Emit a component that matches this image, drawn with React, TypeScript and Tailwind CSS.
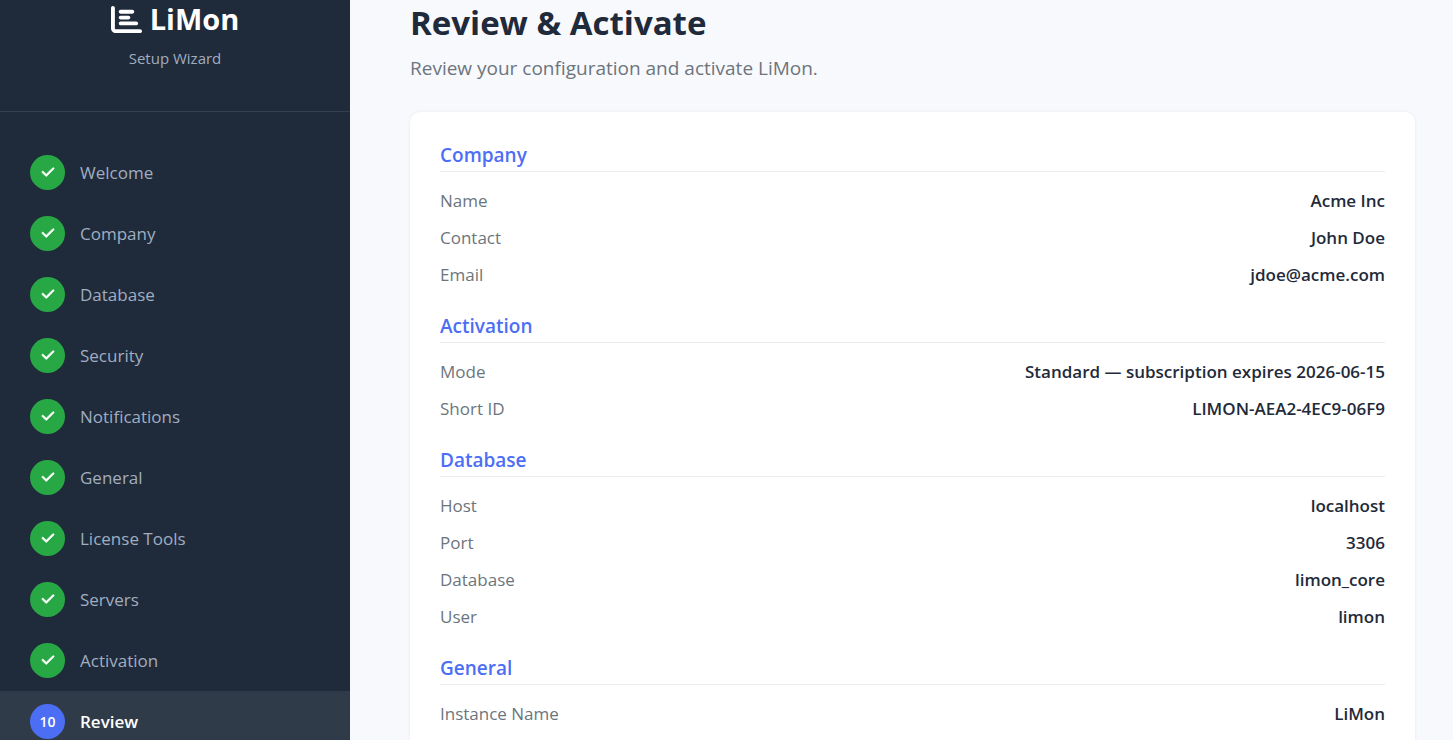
import { FaChartBar, FaCheck } from "react-icons/fa6";

type Section = {
  title: string;
  rows: { label: string; value: string }[];
};

const steps = [
  "Welcome",
  "Company",
  "Database",
  "Security",
  "Notifications",
  "General",
  "License Tools",
  "Servers",
  "Activation",
  "Review",
];

const currentStep = 9;

const sections: Section[] = [
  {
    title: "Company",
    rows: [
      { label: "Name", value: "Acme Inc" },
      { label: "Contact", value: "John Doe" },
      { label: "Email", value: "jdoe@acme.com" },
    ],
  },
  {
    title: "Activation",
    rows: [
      { label: "Mode", value: "Standard — subscription expires 2026-06-15" },
      { label: "Short ID", value: "LIMON-AEA2-4EC9-06F9" },
    ],
  },
  {
    title: "Database",
    rows: [
      { label: "Host", value: "localhost" },
      { label: "Port", value: "3306" },
      { label: "Database", value: "limon_core" },
      { label: "User", value: "limon" },
    ],
  },
  {
    title: "General",
    rows: [{ label: "Instance Name", value: "LiMon" }],
  },
];

function Sidebar() {
  return (
    <aside className="w-[350px] shrink-0 overflow-y-auto bg-[#1f2a3a] [scrollbar-width:none]">
      <div className="border-b border-[#35404e] pb-10 text-center">
        <div className="flex h-[38px] items-center justify-center gap-2 text-white">
          <FaChartBar className="size-[31px]" />
          <span className="text-[29px] font-bold leading-[38px]">LiMon</span>
        </div>
        <p className="mt-2 text-[15px] leading-[25px] text-[#a0aec0]">Setup Wizard</p>
      </div>
      <ol className="pt-[30px]">
        {steps.map((step, i) => {
          const active = i === currentStep;
          return (
            <li
              key={step}
              aria-current={active ? "step" : undefined}
              className={`flex items-center gap-[15px] px-[30px] py-[13px] ${active ? "bg-[#303b49]" : ""}`}
            >
              <span
                className={`flex size-[35px] items-center justify-center rounded-full text-sm font-semibold text-white ${active ? "bg-[#4c6ef5]" : "bg-[#28a745]"}`}
              >
                {i < currentStep ? <FaCheck className="mb-px size-[14px] stroke-current stroke-[24px]" /> : i + 1}
              </span>
              <span className={`text-[17px] leading-6 ${active ? "font-semibold text-white" : "text-[#a0aec0]"}`}>
                {step}
              </span>
            </li>
          );
        })}
      </ol>
    </aside>
  );
}

function ReviewSection({ section }: { section: Section }) {
  return (
    <section className="mb-5">
      <h2 className="mb-2.5 border-b border-[#e9ecef] pb-[3px] text-[19px] font-semibold leading-[26px] text-[#4c6ef5]">
        {section.title}
      </h2>
      <dl>
        {section.rows.map((row) => (
          <div key={row.label} className="flex justify-between py-[5px] text-[17px] leading-[27px]">
            <dt className="text-[#6c757d]">{row.label}</dt>
            <dd className="font-semibold text-[#1f2a3a]">{row.value}</dd>
          </div>
        ))}
      </dl>
    </section>
  );
}

export default function App() {
  return (
    <div className="flex h-screen bg-[#f8f9fd] font-['Open_Sans','Noto_Sans',sans-serif]">
      <Sidebar />
      <main className="min-w-0 flex-1 overflow-y-auto pl-[60px] pr-[38px] [scrollbar-width:none]">
        <h1 className="text-[33px] font-bold leading-[46px] text-[#1f2a3a]">Review &amp; Activate</h1>
        <p className="mt-2 text-[19px] leading-7 text-[#6c757d]">Review your configuration and activate LiMon.</p>
        <div className="mt-[30px] rounded-[10px] bg-white p-[30px] shadow-[0_0_4px_rgba(0,0,0,0.06)]">
          {sections.map((section) => (
            <ReviewSection key={section.title} section={section} />
          ))}
        </div>
      </main>
    </div>
  );
}
